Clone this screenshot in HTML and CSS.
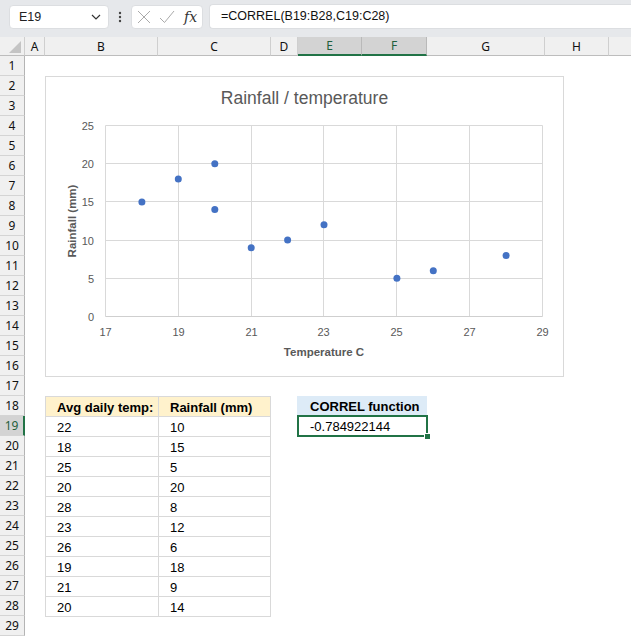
FILE: index.html
```html
<!DOCTYPE html>
<html>
<head>
<meta charset="utf-8">
<title>CORREL</title>
<link rel="stylesheet" href="styles.css">
</head>
<body>
<div class="app">
  <div class="topbar">
    <div class="namebox">
      <span>E19</span>
      <svg class="chev" width="10" height="6" viewBox="0 0 10 6"><path d="M1 1 L5 5 L9 1" fill="none" stroke="#333" stroke-width="1.2"/></svg>
    </div>
    <div class="dots">
      <svg width="4" height="12" viewBox="0 0 4 12"><circle cx="2" cy="2" r="1.2" fill="#444"/><circle cx="2" cy="6" r="1.2" fill="#444"/><circle cx="2" cy="10" r="1.2" fill="#444"/></svg>
    </div>
    <div class="fxbox">
      <svg class="ico" width="14" height="14" viewBox="0 0 14 14"><path d="M1 1 L13 13 M13 1 L1 13" stroke="#aaa" stroke-width="1"/></svg>
      <svg class="ico" width="16" height="14" viewBox="0 0 16 14"><path d="M1 8 L5.5 12.5 L15 1" fill="none" stroke="#aaa" stroke-width="1"/></svg>
      <span class="fx">fx</span>
    </div>
    <div class="formula">=CORREL(B19:B28,C19:C28)</div>
  </div>

  <div class="colheads">
    <div class="corner"><svg width="24" height="18" viewBox="0 0 24 18"><path d="M9 16 L21 16 L21 4 Z" fill="#c4c4c4"/></svg></div>
    <div class="ch col-a">A</div>
    <div class="ch col-b">B</div>
    <div class="ch col-c">C</div>
    <div class="ch col-d">D</div>
    <div class="ch col-e sel">E</div>
    <div class="ch col-f sel">F</div>
    <div class="ch col-g">G</div>
    <div class="ch col-h">H</div>
    <div class="ch col-i"></div>
  </div>

  <div class="main">
    <div class="rowheads">
      <div class="rh">1</div><div class="rh">2</div><div class="rh">3</div><div class="rh">4</div>
      <div class="rh">5</div><div class="rh">6</div><div class="rh">7</div><div class="rh">8</div>
      <div class="rh">9</div><div class="rh">10</div><div class="rh">11</div><div class="rh">12</div>
      <div class="rh">13</div><div class="rh">14</div><div class="rh">15</div><div class="rh">16</div>
      <div class="rh">17</div><div class="rh">18</div><div class="rh sel">19</div><div class="rh">20</div>
      <div class="rh">21</div><div class="rh">22</div><div class="rh">23</div><div class="rh">24</div>
      <div class="rh">25</div><div class="rh">26</div><div class="rh">27</div><div class="rh">28</div>
      <div class="rh">29</div>
    </div>

    <div class="sheet">
      <svg class="chart" width="519" height="301" viewBox="0 0 519 301">
        <rect x="0.5" y="0.5" width="518" height="300" fill="#fff" stroke="#d9d9d9"/>
        <text class="ctitle" x="259.5" y="28" text-anchor="middle">Rainfall / temperature</text>
        <g stroke="#d9d9d9" stroke-width="1">
          <path d="M60.5 49.5 H497.5 M60.5 87.5 H497.5 M60.5 125.5 H497.5 M60.5 164.5 H497.5 M60.5 202.5 H497.5"/>
          <path d="M60.5 49.5 V240.5 M133.5 49.5 V240.5 M206.5 49.5 V240.5 M278.5 49.5 V240.5 M351.5 49.5 V240.5 M424.5 49.5 V240.5 M497.5 49.5 V240.5"/>
        </g>
        <path d="M60.5 240.5 H497.5" stroke="#cfcfcf"/>
        <g class="tick" text-anchor="end">
          <text x="49" y="53.5">25</text>
          <text x="49" y="91.5">20</text>
          <text x="49" y="129.5">15</text>
          <text x="49" y="168.5">10</text>
          <text x="49" y="206.5">5</text>
          <text x="49" y="244.5">0</text>
        </g>
        <g class="tick" text-anchor="middle">
          <text x="60.5" y="260">17</text>
          <text x="133.5" y="260">19</text>
          <text x="206.5" y="260">21</text>
          <text x="278.5" y="260">23</text>
          <text x="351.5" y="260">25</text>
          <text x="424.5" y="260">27</text>
          <text x="497.5" y="260">29</text>
        </g>
        <text class="atitle" x="279" y="280" text-anchor="middle">Temperature C</text>
        <text class="atitle" transform="translate(31 145) rotate(-90)" text-anchor="middle">Rainfall (mm)</text>
        <g fill="#4472c4">
          <circle cx="242.6" cy="164.1" r="3.5"/>
          <circle cx="96.9" cy="125.9" r="3.5"/>
          <circle cx="351.9" cy="202.3" r="3.5"/>
          <circle cx="169.8" cy="87.7" r="3.5"/>
          <circle cx="461.1" cy="179.4" r="3.5"/>
          <circle cx="279.0" cy="148.8" r="3.5"/>
          <circle cx="388.3" cy="194.7" r="3.5"/>
          <circle cx="133.3" cy="103.0" r="3.5"/>
          <circle cx="206.2" cy="171.7" r="3.5"/>
          <circle cx="169.8" cy="133.5" r="3.5"/>
        </g>
      </svg>

      <div class="data">
        <div class="cell head">Avg daily temp:</div><div class="cell head">Rainfall (mm)</div>
        <div class="cell">22</div><div class="cell">10</div>
        <div class="cell">18</div><div class="cell">15</div>
        <div class="cell">25</div><div class="cell">5</div>
        <div class="cell">20</div><div class="cell">20</div>
        <div class="cell">28</div><div class="cell">8</div>
        <div class="cell">23</div><div class="cell">12</div>
        <div class="cell">26</div><div class="cell">6</div>
        <div class="cell">19</div><div class="cell">18</div>
        <div class="cell">21</div><div class="cell">9</div>
        <div class="cell">20</div><div class="cell">14</div>
      </div>

      <div class="correl">
        <div class="correl-head">CORREL function</div>
        <div class="correl-val">-0.784922144</div>
      </div>
    </div>
  </div>
</div>
</body>
</html>
```

FILE: styles.css
```css
html, body {
  margin: 0;
  padding: 0;
  background: #fff;
}
body {
  font-family: "Liberation Sans", Arial, sans-serif;
  color: #000;
  overflow: hidden;
}
.app {
  width: 631px;
  height: 637px;
  overflow: hidden;
}

/* top formula bar */
.topbar {
  height: 37px;
  box-sizing: border-box;
  background: #e6e8eb;
  display: flex;
  align-items: flex-start;
  padding: 5px 0 0 9px;
}
.namebox {
  width: 100px;
  height: 24px;
  box-sizing: border-box;
  background: #fff;
  border: 1px solid #dcdee1;
  border-radius: 4px;
  display: flex;
  align-items: center;
  justify-content: space-between;
  padding: 0 7px 0 9px;
  font-size: 12.5px;
  color: #222;
}
.dots {
  width: 22px;
  height: 24px;
  display: flex;
  align-items: center;
  justify-content: center;
}
.fxbox {
  width: 72px;
  height: 24px;
  box-sizing: border-box;
  background: #fff;
  border: 1px solid #dcdee1;
  border-radius: 4px;
  display: flex;
  align-items: center;
  padding-left: 5px;
  gap: 8px;
}
.fx {
  font-family: "DejaVu Serif", "Liberation Serif", serif;
  font-style: italic;
  font-size: 14px;
  color: #333;
  margin-left: 1px;
}
.formula {
  flex: 1;
  margin-left: 6px;
  margin-top: -1px;
  height: 25px;
  box-sizing: border-box;
  background: #fff;
  border: 1px solid #dcdee1;
  border-right: none;
  border-radius: 4px 0 0 4px;
  padding-left: 11px;
  line-height: 23px;
  font-size: 12.5px;
  color: #111;
}

/* column headers */
.colheads {
  display: flex;
  height: 19px;
  background: #f0f0f0;
}
.corner {
  width: 25px;
  height: 19px;
  box-sizing: border-box;
  border-right: 1px solid #cfcfcf;
  border-bottom: 1px solid #bdbdbd;
}
.corner svg { display: block; }
.ch {
  height: 19px;
  box-sizing: border-box;
  border-right: 1px solid #cfcfcf;
  border-bottom: 1px solid #bdbdbd;
  display: flex;
  align-items: center;
  justify-content: center;
  font-family: "Noto Sans", "Liberation Sans", sans-serif;
  font-size: 12px;
  color: #111;
}
.ch.sel {
  background: #d3d3d3;
  border-bottom: 2px solid #217346;
  border-right-color: #b9b9b9;
  color: #1f5f3c;
}
.col-a { width: 20px; }
.col-b { width: 113px; }
.col-c { width: 113px; }
.col-d { width: 27px; }
.col-e { width: 64px; }
.col-f { width: 65px; }
.col-g { width: 118px; }
.col-h { width: 64px; }
.col-i { flex: 1; border-right: none; }

/* body */
.main {
  display: flex;
}
.rowheads {
  width: 25px;
  flex: none;
}
.rh {
  height: 20px;
  box-sizing: border-box;
  background: #f0f0f0;
  border-bottom: 1px solid #d4d4d4;
  border-right: 1px solid #b4b4b4;
  text-align: center;
  line-height: 20px;
  font-family: "Noto Sans", "Liberation Sans", sans-serif;
  font-size: 12px;
  color: #111;
}
.rh.sel {
  background: #d3d3d3;
  border-right: 2px solid #217346;
  color: #1f5f3c;
}

.sheet {
  position: relative;
  flex: 1;
  display: flex;
  align-items: flex-start;
  padding: 340px 0 0 20px;
  font-size: 13px;
}
.chart {
  position: absolute;
  left: 20px;
  top: 20px;
  display: block;
  font-family: "Liberation Sans", Arial, sans-serif;
}
.ctitle {
  font-size: 17.5px;
  fill: #595959;
}
.tick text {
  font-size: 11px;
  fill: #595959;
}
.atitle {
  font-size: 11.5px;
  font-weight: bold;
  fill: #595959;
}

.data {
  display: grid;
  grid-template-columns: 113px 112px;
  grid-auto-rows: 20px;
  border-left: 1px solid #d9d9d9;
  border-top: 1px solid #d9d9d9;
}
.cell {
  box-sizing: border-box;
  border-right: 1px solid #d9d9d9;
  border-bottom: 1px solid #d9d9d9;
  padding-left: 11px;
  line-height: 21px;
  overflow: hidden;
  white-space: nowrap;
}
.cell.head {
  background: #fff2cc;
  font-weight: bold;
}

.correl {
  margin-left: 26px;
  width: 131px;
}
.correl-head {
  height: 20px;
  width: 130px;
  background: #ddebf7;
  font-weight: bold;
  padding-left: 13px;
  box-sizing: border-box;
  line-height: 22px;
  white-space: nowrap;
}
.correl-val {
  position: relative;
  height: 22px;
  margin-top: -1px;
  box-sizing: border-box;
  border: 2px solid #217346;
  padding-left: 11px;
  line-height: 19px;
}
.correl-val::after {
  content: "";
  position: absolute;
  right: -4px;
  bottom: -4px;
  width: 5px;
  height: 5px;
  background: #217346;
  box-shadow: 0 0 0 1px #fff;
}
```
